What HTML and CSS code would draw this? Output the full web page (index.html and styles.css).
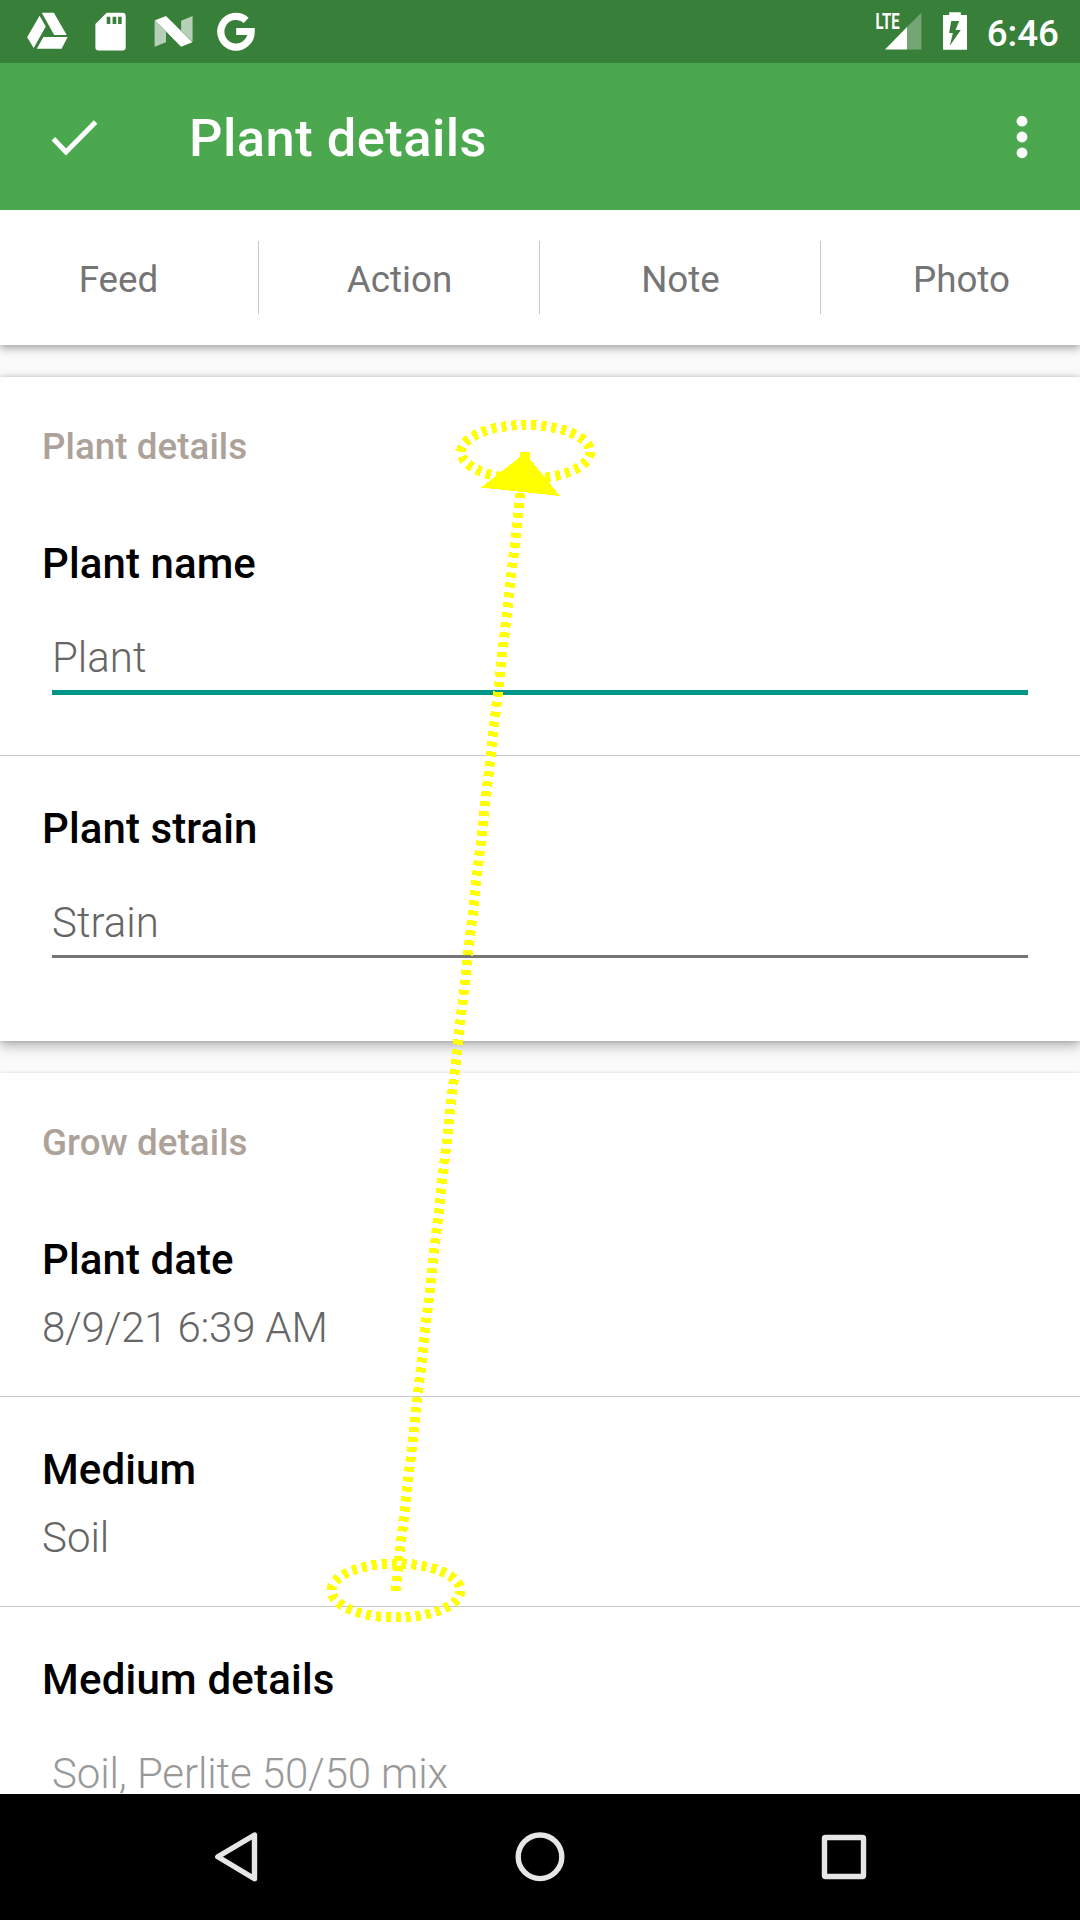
FILE: index.html
```html
<!DOCTYPE html>
<html lang="en">
<head>
<meta charset="utf-8">
<title>Plant details</title>
<link rel="stylesheet" href="styles.css">
</head>
<body>
<div class="screen">
  <div class="status-bar">
    <svg class="notifications" width="240" height="63" viewBox="20 0 240 63" fill="#fff">
      <path d="M41.7 12.7H53.9L66.7 35H54.2zM39.6 15.8L45.8 26.5L33.7 48L27.1 37.2zM43.4 37H67.7L61.6 48.8H36.8z"/>
      <path fill-rule="evenodd" d="M106.7 12.7H122.5a3.2 3.2 0 0 1 3.2 3.2V47.2a3.2 3.2 0 0 1-3.2 3.2H98.6a3.2 3.2 0 0 1-3.2-3.2V24zM106.7 16.7V24h3.6v-7.3zM112.6 16.7V24h3.7v-7.3zM118.1 16.7V24h3.6v-7.3z"/>
      <path opacity=".63" d="M154.6 20L166 31.7V42.3L154.6 46.8zM181.1 20.7L192.6 16V41.7L181.1 30.7z"/>
      <path d="M155 20.2L166 16L192.4 42.2L181.1 46.8z"/>
      <path fill="none" stroke="#fff" stroke-width="7.2" d="M246.2 20.3A15.2 15.4 0 1 0 251.2 31.5H236.2"/>
    </svg>
    <div class="system">
      <svg width="100" height="63" viewBox="872 0 100 63" fill="#fff">
        <text class="network" x="875.6" y="29" textLength="24" lengthAdjust="spacingAndGlyphs">LTE</text>
        <path opacity=".3" d="M907 27L921.4 12.7V49.4H907z"/>
        <path d="M885 49.4L907 27V49.4z"/>
        <path fill-rule="evenodd" d="M949.2 12.2H960.8V15H967V49.8H943V15H949.2zM951.2 21L949.1 33H952.9L949.8 45.7L960.8 30H955.6L959.1 21z"/>
      </svg>
      <span class="clock">6:46</span>
    </div>
  </div>

  <header class="app-bar">
    <svg class="done" width="56" height="48" viewBox="46 112.5 56 48" fill="none" stroke="#fff" stroke-width="5"><path d="M53.3 138.3L66 151.4L95.6 121.5"/></svg>
    <h1>Plant details</h1>
    <svg class="more" width="16" height="48" viewBox="1014.4 112.5 16 48" fill="#fff"><circle cx="1022.4" cy="120.7" r="5.4"/><circle cx="1022.4" cy="136.5" r="5.4"/><circle cx="1022.4" cy="152.3" r="5.4"/></svg>
  </header>

  <main class="content">
    <nav class="tabs">
      <div class="tab-row">
        <a class="tab">Feed</a><a class="tab">Action</a><a class="tab">Note</a><a class="tab">Photo</a>
      </div>
    </nav>

    <section class="card card-plant">
      <h2>Plant details</h2>
      <div class="field first">
        <h3>Plant name</h3>
        <div class="input focused">Plant</div>
      </div>
      <div class="field">
        <h3>Plant strain</h3>
        <div class="input">Strain</div>
      </div>
    </section>

    <section class="card card-grow">
      <h2>Grow details</h2>
      <div class="field first">
        <h3>Plant date</h3>
        <p class="date">8/9/21 6:39 AM</p>
      </div>
      <div class="field">
        <h3>Medium</h3>
        <p>Soil</p>
      </div>
      <div class="field">
        <h3 class="wide">Medium details</h3>
        <div class="input hint">Soil, Perlite 50/50 mix</div>
      </div>
    </section>
  </main>

  <footer class="nav-bar">
    <svg width="52" height="60" viewBox="210 1827 52 60"><path d="M217.8 1856.8L254.5 1835V1878.8z"/></svg>
    <svg width="60" height="60" viewBox="510 1827 60 60"><circle cx="540" cy="1856.8" r="21.8"/></svg>
    <svg width="52" height="60" viewBox="818 1827 52 60"><rect x="824.5" y="1837.5" width="39" height="39" rx="1"/></svg>
  </footer>

  <!-- swipe gesture: from the lower ellipse up to the upper one -->
  <svg class="gesture" width="1080" height="1920" viewBox="0 0 1080 1920" shape-rendering="crispEdges">
    <g fill="none" stroke="#ff0" stroke-width="10" stroke-dasharray="5 5">
      <ellipse cx="525.7" cy="452" rx="64.5" ry="27"/>
      <ellipse cx="396" cy="1590.5" rx="64.5" ry="27"/>
      <path d="M395.5 1591L525.3 452"/>
    </g>
    <path fill="#ff0" d="M520 452H530V459L560 496L481 487.5L520 457z"/>
  </svg>
</div>
</body>
</html>
```
FILE: styles.css
```css
* { box-sizing: border-box; margin: 0; padding: 0; }

body {
  font-family: Roboto, "Liberation Sans", sans-serif;
  background: #fafafa;
}

.screen {
  position: relative;
  display: flex;
  flex-direction: column;
  width: 1080px;
  height: 1920px;
  overflow: hidden;
}

svg { display: block; }

.status-bar {
  display: flex;
  justify-content: space-between;
  flex: 0 0 63px;
  height: 63px;
  padding: 0 21px 0 20px;
  background: #387f3a;
}

.system { display: flex; gap: 15px; }

.network { font: 700 22px Roboto, sans-serif; }

.clock {
  padding-top: 3px;
  font-size: 36.75px;
  font-weight: 500;
  line-height: 62px;
  color: #fff;
}

.app-bar {
  display: flex;
  align-items: center;
  flex: 0 0 147px;
  padding: 0 49.6px 0 46px;
  background: #4ba84e;
  color: #fff;
}

.app-bar h1 {
  flex: 1;
  padding: 3px 0 0 87px;
  font-size: 52.5px;
  font-weight: 500;
  line-height: 62px;
  letter-spacing: .45px;
}

.content {
  flex: 1 1 0;
  min-height: 0;
  overflow: hidden;
}

.tabs {
  display: flex;
  justify-content: center;
  height: 135px;
  margin-bottom: 32px;
  background: #fff;
  box-shadow: 0 4px 8px rgba(0, 0, 0, .28), 0 0 5px rgba(0, 0, 0, .1);
}

.tab-row {
  display: flex;
  flex: 0 0 1124px;
  align-items: center;
}

.tab {
  flex: 0 0 281px;
  height: 73px;
  padding-left: 1px;
  border-right: 1px solid #c8c8c8;
  font-size: 36.75px;
  line-height: 77px;
  text-align: center;
  color: #757575;
}

.tab:last-child {
  padding-left: 0;
  border-right: 0;
}

.card {
  padding-top: 48px;
  background: #fff;
  box-shadow: 0 5px 12px rgba(0, 0, 0, .28), 0 0 5px rgba(0, 0, 0, .18);
}

.card-plant { height: 664px; margin-bottom: 32px; }

.card-grow {
  height: 780px;
  box-shadow: 0 0 3px rgba(0, 0, 0, .16);
}

h2 {
  padding-left: 42px;
  font-size: 36.75px;
  font-weight: 500;
  line-height: 44px;
  letter-spacing: .05px;
  color: #aca299;
}

.field {
  padding: 48px 42px 43px;
  border-bottom: 1px solid #c8c8c8;
}

.field.first { padding-top: 70px; }

.field:last-child { border-bottom: 0; }

h3 {
  font-size: 42px;
  font-weight: 500;
  line-height: 50px;
  letter-spacing: .09px;
  color: #000;
}

h3.wide { letter-spacing: .2px; }

.field p {
  margin-top: 18px;
  font-size: 42px;
  font-weight: 300;
  line-height: 50px;
  color: #666;
}

.field .date { letter-spacing: -.2px; }

.input {
  height: 60px;
  margin: 44px 10px 0;
  border-bottom: 3px solid #757575;
  font-size: 42px;
  font-weight: 300;
  line-height: 50px;
  color: #666;
}

.input.focused {
  height: 62px;
  margin-bottom: 17px;
  border-bottom: 5px solid #009688;
}

.input.hint {
  letter-spacing: -.12px;
  color: #999;
}

.nav-bar {
  display: flex;
  justify-content: space-between;
  align-items: center;
  flex: 0 0 126px;
  padding: 0 210px;
  background: #000;
}

.nav-bar svg {
  fill: none;
  stroke: #e6e6e6;
  stroke-width: 5.4;
  stroke-linejoin: round;
}

.gesture {
  position: absolute;
  top: 0;
  left: 0;
  pointer-events: none;
}
```
